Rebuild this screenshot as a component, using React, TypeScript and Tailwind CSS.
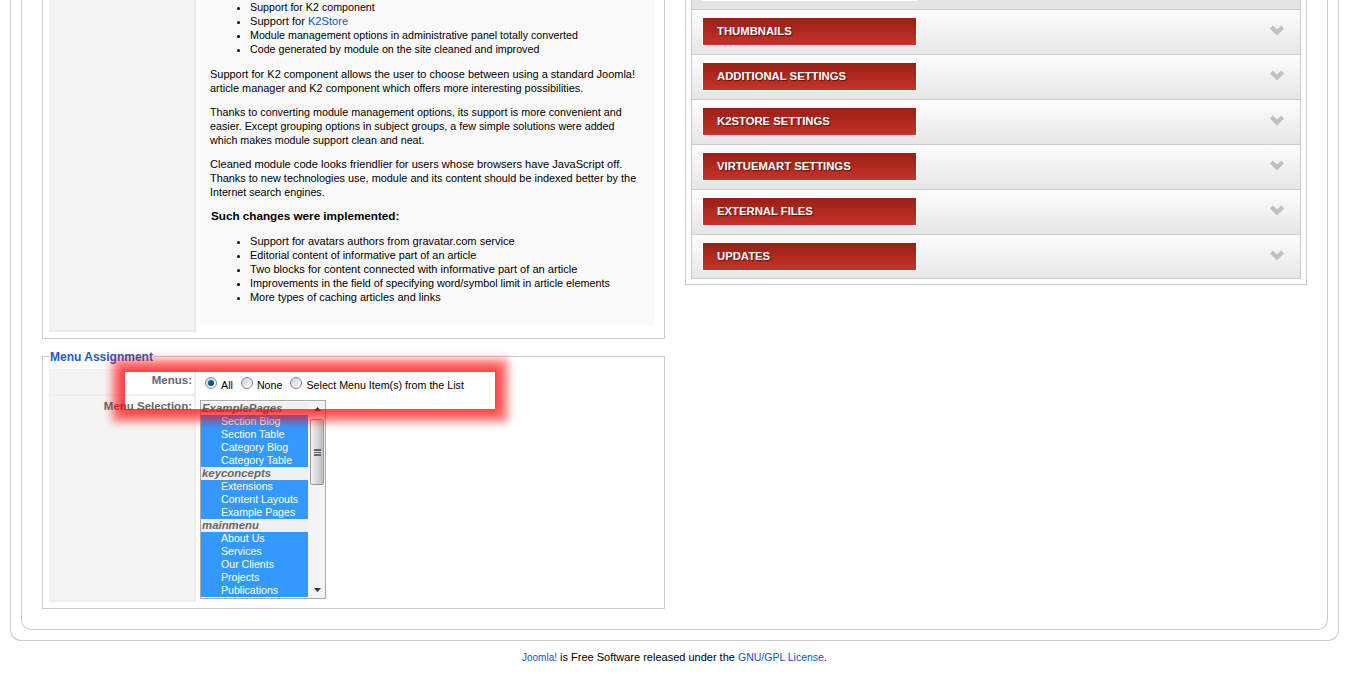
const items = [
  { g: "ExamplePages", c: ["Section Blog", "Section Table", "Category Blog", "Category Table"] },
  { g: "keyconcepts", c: ["Extensions", "Content Layouts", "Example Pages"] },
  { g: "mainmenu", c: ["About Us", "Services", "Our Clients", "Projects", "Publications"] },
];
const rows = ["THUMBNAILS", "ADDITIONAL SETTINGS", "K2STORE SETTINGS", "VIRTUEMART SETTINGS", "EXTERNAL FILES", "UPDATES"];

function Chevron() {
  return (
    <svg width="14" height="11" viewBox="0 0 14 11" className="block">
      <path d="M0 3.4 L2.8 0.6 L7 4.6 L11.2 0.6 L14 3.4 L7 10.6Z" fill="#c0c0c0" />
    </svg>
  );
}

function Radio({ on }: { on?: boolean }) {
  return (
    <span className="relative inline-flex h-[12px] w-[12px] items-center justify-center rounded-full border border-[#7f8a94] bg-gradient-to-br from-[#cfcfcf] to-[#ffffff]">
      {on && <span className="h-[6px] w-[6px] rounded-full bg-gradient-to-br from-[#0f6fa8] to-[#0a3f70]" />}
    </span>
  );
}

export default function App() {
  return (
    <div className="h-[674px] w-[1349px] overflow-hidden bg-white font-['Liberation_Sans',Arial,sans-serif] text-[10.7px] leading-[14px] text-black">
      <div className="ml-[10px] h-[641px] w-[1329px] rounded-b-[11px] border-x border-b border-[#cccccc] px-[10px]">
        <div className="flex h-[630px] w-[1307px] gap-[20px] rounded-b-[10px] border-x border-b border-[#cccccc] px-[20px]">
          {/* left column */}
          <div className="flex w-[623px] flex-col">
            <div className="flex h-[339px] gap-[4px] border-x border-b border-[#cccccc] pl-[6px]">
              <div className="h-[332px] w-[147px] border-r-2 border-b-2 border-[#e9e9e9] bg-[#f4f4f4]" />
              <div className="h-[325px] w-[455px] whitespace-nowrap bg-[#f9f9f9] px-[10px]">
                <ul className="list-disc pl-[40px]">
                  <li>Support for K2 component</li>
                  <li className="text-[11.1px]">Support for <span className="text-[#0b55c4]">K2Store</span></li>
                  <li>Module management options in administrative panel totally converted</li>
                  <li>Code generated by module on the site cleaned and improved</li>
                </ul>
                <p className="mt-[11px]">
                  <span className="block text-[10.98px]">Support for K2 component allows the user to choose between using a standard Joomla!</span>
                  <span className="block text-[10.9px]">article manager and K2 component which offers more interesting possibilities.</span>
                </p>
                <p className="mt-[10px]">
                  <span className="block text-[10.78px]">Thanks to converting module management options, its support is more convenient and</span>
                  <span className="block text-[10.75px]">easier. Except grouping options in subject groups, a few simple solutions were added</span>
                  <span className="block">which makes module support clean and neat.</span>
                </p>
                <p className="mt-[10px]">
                  <span className="block text-[11.1px]">Cleaned module code looks friendlier for users whose browsers have JavaScript off.</span>
                  <span className="block text-[10.9px]">Thanks to new technologies use, module and its content should be indexed better by the</span>
                  <span className="block">Internet search engines.</span>
                </p>
                <h4 className="mt-[10px] pl-px text-[11.7px] font-bold">Such changes were implemented:</h4>
                <ul className="mt-[11px] list-disc pl-[40px]">
                  <li className="text-[11.08px]">Support for avatars authors from gravatar.com service</li>
                  <li className="text-[10.84px]">Editorial content of informative part of an article</li>
                  <li className="text-[11.1px]">Two blocks for content connected with informative part of an article</li>
                  <li className="text-[10.82px]">Improvements in the field of specifying word/symbol limit in article elements</li>
                  <li className="text-[10.93px]">More types of caching articles and links</li>
                </ul>
              </div>
            </div>

            <fieldset className="relative mt-[10px] h-[260px] border border-[#cccccc] pl-[6px]">
              <legend className="relative top-px ml-px text-[12px] font-bold text-[#1a5cc8]">Menu Assignment</legend>
              {/* static cell backgrounds sit under this white plate; cell contents sit above it */}
              <div className="mt-[6px] flex h-[27px]">
                <div className="h-[27px] w-[147px] bg-[#f4f4f4]">
                  <div className="relative z-10 h-[27px] border-r-2 border-b-2 border-[#eeeeee] pr-[2px] pt-[4px] text-right text-[11.5px] font-bold text-[#666666]">Menus:</div>
                </div>
                <div className="relative z-10 flex items-start pl-[9px] pt-[8px]">
                  <Radio on /><span className="ml-[4px] mt-[1px]">All</span>
                  <span className="ml-[8px]"><Radio /></span><span className="ml-[4px] mt-[1px]">None</span>
                  <span className="ml-[8px]"><Radio /></span><span className="ml-[4px] mt-[1px]">Select Menu Item(s) from the List</span>
                </div>
              </div>
              <div className="flex h-[206px]">
                <div className="h-[206px] w-[147px] bg-[#f4f4f4]">
                  <div className="relative z-10 h-[206px] border-r-2 border-b-2 border-[#eeeeee] pr-[2px] pt-[3px] text-right text-[11.5px] font-bold text-[#666666]">Menu Selection:</div>
                </div>
                <div className="relative z-10 ml-[4px] mt-[4px] flex h-[199px] w-[126px] border border-[#aaaaaa] bg-white">
                  <div className="w-[107px] pt-[1px] text-[10.6px] leading-[13px]">
                    {items.map((g) => (
                      <div key={g.g}>
                        <div className="bg-[#f0f0f0] pl-[1px] text-[11.4px] font-bold italic text-[#666666]">{g.g}</div>
                        {g.c.map((c) => (
                          <div key={c} className="bg-[#3399ff] pl-[20px] text-white">{c}</div>
                        ))}
                      </div>
                    ))}
                  </div>
                  <div className="flex w-[17px] flex-col items-center bg-[#f4f4f4] pl-px">
                    <svg width="7" height="4" viewBox="0 0 7 4" className="mt-[6px] block"><path d="M0 4 L3.5 0 L7 4Z" fill="#333" /></svg>
                    <div className="mt-[8px] flex h-[66px] w-[14px] items-center justify-center rounded-[2px] border border-[#999999] bg-gradient-to-r from-[#f3f3f3] to-[#bcbcbc]">
                      <div className="h-[7px] w-[7px] border-y-2 border-[#666666] bg-[linear-gradient(#666,#666)] bg-[length:100%_1px] bg-center bg-no-repeat" />
                    </div>
                    <svg width="7" height="4" viewBox="0 0 7 4" className="mt-auto mb-[6px] block"><path d="M0 0 L3.5 4 L7 0Z" fill="#333" /></svg>
                  </div>
                </div>
              </div>
              <div className="absolute left-[82px] top-[9px] z-0 h-[37px] w-[370px] bg-white" />
              {/* highlight glow painted over the form */}
              <div className="pointer-events-none absolute left-[82px] top-[9px] z-20 h-[37px] w-[370px] shadow-[0_0_8px_5px_rgba(255,0,0,0.5),0_0_8px_13px_rgba(255,0,0,0.5)]" />
            </fieldset>
          </div>

          {/* right column */}
          <div className="h-[285px] w-[622px] border-x border-b border-[#cccccc] px-[5px]">
            <div className="w-[610px] border-x border-b border-[#cccccc]">
              <div className="h-[10px] border-b border-[#cccccc] bg-[#e4e4e4]">
                <div className="ml-[10px] h-px w-[215px] bg-white" />
              </div>
              {rows.map((r, i) => (
                <div
                  key={r}
                  className={
                    i < rows.length - 1
                      ? "flex h-[45px] items-start justify-between border-b border-[#cccccc] bg-gradient-to-b from-[#fdfdfd] to-[#e6e6e6] pl-[10px] pr-[16px] pt-[7px]"
                      : "flex h-[43px] items-start justify-between bg-gradient-to-b from-[#fdfdfd] to-[#e6e6e6] pl-[10px] pr-[16px] pt-[7px]"
                  }
                >
                  <div className="flex h-[29px] w-[215px] items-center border border-white bg-gradient-to-b from-[#991f14] to-[#c6332a] pb-[2px] pl-[14px] text-[11.3px] font-bold text-white [text-shadow:1px_1px_1px_rgba(60,0,0,0.7)]">
                    {r}
                  </div>
                  <div className="mt-[8px]"><Chevron /></div>
                </div>
              ))}
            </div>
          </div>
        </div>
      </div>
      <div className="mt-[9px] text-center text-[11px]">
        <span className="text-[10px] text-[#0b55c4]">Joomla!</span> is Free Software released under the <span className="text-[10.5px] text-[#0b55c4]">GNU/GPL License</span>.
      </div>
    </div>
  );
}
